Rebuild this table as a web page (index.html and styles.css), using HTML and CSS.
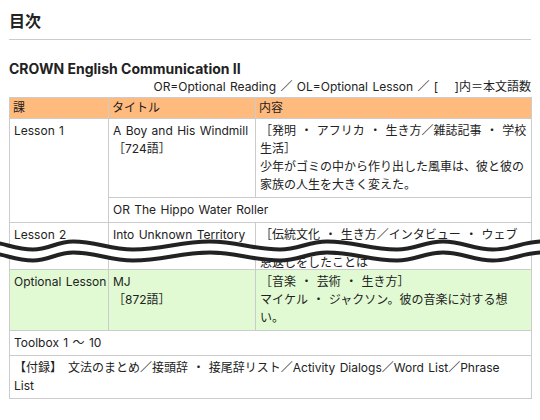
FILE: index.html
```html
<!DOCTYPE html>
<html lang="ja">
<head>
<meta charset="utf-8">
<title>目次</title>
<link rel="stylesheet" href="styles.css">
</head>
<body>
<div class="page">
  <h1 class="title">目次</h1>
  <h2 class="book">CROWN English Communication II</h2>
  <p class="legend">OR=Optional Reading ／ OL=Optional Lesson ／ [　 ]内＝本文語数</p>
  <table class="toc">
    <colgroup><col class="c1"><col class="c2"><col class="c3"></colgroup>
    <thead>
      <tr><th>課</th><th>タイトル</th><th>内容</th></tr>
    </thead>
    <tbody>
      <tr>
        <td rowspan="2" class="lesson">Lesson 1</td>
        <td>A Boy and His Windmill<br>［724語］</td>
        <td>［発明 ・ アフリカ ・ 生き方／雑誌記事 ・ 学校<br>生活］<br>少年がゴミの中から作り出した風車は、彼と彼の<br>家族の人生を大きく変えた。</td>
      </tr>
      <tr><td colspan="2">OR The Hippo Water Roller</td></tr>
      <tr>
        <td class="lesson">Lesson 2</td>
        <td>Into Unknown Territory</td>
        <td class="cut">［伝統文化 ・ 生き方／インタビュー ・ ウェブ<span class="after">恩返しをしたことは</span></td>
      </tr>
      <tr class="ol">
        <td class="lesson">Optional Lesson</td>
        <td>MJ<br>［872語］</td>
        <td>［音楽 ・ 芸術 ・ 生き方］<br>マイケル ・ ジャクソン。彼の音楽に対する想<br>い。</td>
      </tr>
      <tr><td colspan="3">Toolbox 1 ～ 10</td></tr>
      <tr><td colspan="3">【付録】　文法のまとめ／接頭辞 ・ 接尾辞リスト／Activity Dialogs／Word List／Phrase<br>List</td></tr>
    </tbody>
  </table>
  <svg class="wave" width="540" height="40" viewBox="0 0 540 40" aria-hidden="true">
    <defs>
      <path id="w" d="M-17,11.5 C3,11.5 13,19.5 33,19.5 C49,19.5 57,11.5 73,11.5 C97,11.5 109,19.5 133,19.5 C163.8,19.5 179.2,11.5 210,11.5 C238,11.5 252,19.5 280,19.5 C298.8,19.5 308.2,11.5 327,11.5 C355,11.5 369,19.5 397,19.5 C415.4,19.5 424.6,11.5 443,11.5 C463,11.5 473,19.5 493,19.5 C513,19.5 523,11.5 543,11.5 C563,11.5 573,19.5 593,19.5"/>
    </defs>
    <use href="#w" transform="translate(0,5.5)" fill="none" stroke="#fff" stroke-width="12"/>
    <use href="#w" fill="none" stroke="#222" stroke-width="4"/>
    <use href="#w" transform="translate(0,11)" fill="none" stroke="#222" stroke-width="4"/>
  </svg>
</div>
</body>
</html>
```
FILE: styles.css
```css
html, body {
  margin: 0;
  padding: 0;
  background: #fff;
}
body {
  font-family: Inter, "Noto Sans CJK JP", sans-serif;
  font-size: 12px;
  color: #222;
  word-spacing: 1px;
}
.page {
  position: relative;
  padding: 9px 9px 0;
}
.title {
  margin: 0;
  font-size: 16px;
  line-height: 24px;
  font-weight: bold;
  padding-bottom: 6px;
  border-bottom: 1px solid #ccc;
}
.book {
  margin: 20px 0 0;
  font-size: 14px;
  line-height: 18px;
  font-weight: bold;
  word-spacing: 0;
}
.legend {
  margin: 0;
  line-height: 18px;
  text-align: right;
}
.toc {
  margin-top: 1px;
  width: 522px;
  table-layout: fixed;
  border-collapse: collapse;
}
.c1 { width: 99px; }
.c2 { width: 147px; }
.c3 { width: 276px; }
.toc th,
.toc td {
  border: 1px solid #ccc;
  text-align: left;
  vertical-align: top;
  line-height: 18px;
}
.toc th {
  background: #ffbb7e;
  font-weight: normal;
  padding: 1px 3px;
}
.toc td {
  padding: 3px 4px;
}
.toc td.lesson {
  white-space: nowrap;
}
.toc td.cut {
  padding-bottom: 0;
}
.after {
  display: block;
  margin-top: 13px;
  line-height: 12px;
}
.ol td {
  background: #e1fad3;
}
.wave {
  position: absolute;
  left: 0;
  top: 230px;
  display: block;
}
```
